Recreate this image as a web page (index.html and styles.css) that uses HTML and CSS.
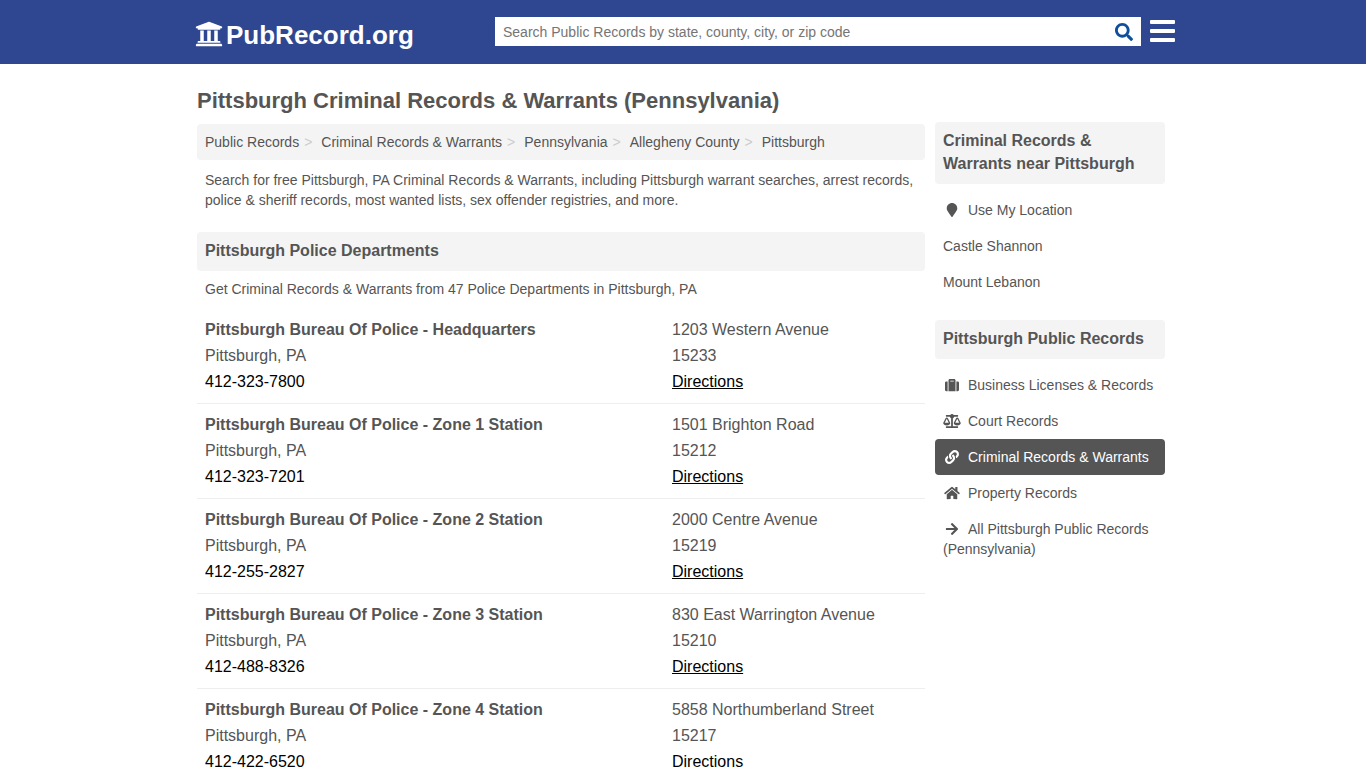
FILE: index.html
```html
<!DOCTYPE html>
<html lang="en">
<head>
<meta charset="utf-8">
<meta name="viewport" content="width=device-width, initial-scale=1">
<title>Pittsburgh Criminal Records &amp; Warrants (Pennsylvania)</title>
<link rel="stylesheet" href="styles.css">
</head>
<body>
<header class="site-header">
  <div class="header-inner">
    <a class="logo" href="#">
      <svg class="logo-icon" viewBox="0 0 512 512" aria-hidden="true"><path d="M496 128v16a8 8 0 0 1-8 8h-24v12c0 6.627-5.373 12-12 12H60c-6.627 0-12-5.373-12-12v-12H24a8 8 0 0 1-8-8v-16a8 8 0 0 1 4.941-7.392l232-88a7.996 7.996 0 0 1 6.118 0l232 88A8 8 0 0 1 496 128zm-24 304H40c-13.255 0-24 10.745-24 24v16a8 8 0 0 0 8 8h464a8 8 0 0 0 8-8v-16c0-13.255-10.745-24-24-24zM96 192v192H60c-6.627 0-12 5.373-12 12v20h416v-20c0-6.627-5.373-12-12-12h-36V192h-64v192h-64V192h-64v192h-64V192H96z"/></svg>
      <span>PubRecord.org</span>
    </a>
    <form class="search" role="search">
      <input class="search-input" type="text" aria-label="Search Public Records" placeholder="Search Public Records by state, county, city, or zip code">
      <button class="search-button" type="button" aria-label="Search">
        <svg class="search-icon" viewBox="0 0 512 512" aria-hidden="true"><path d="M505 442.700L405.300 343c-4.500-4.500-10.600-7-17-7H372c27.600-35.300 44-79.700 44-128C416 93.100 322.900 0 208 0S0 93.100 0 208s93.100 208 208 208c48.300 0 92.700-16.400 128-44v16.300c0 6.400 2.500 12.500 7 17l99.700 99.700c9.400 9.400 24.600 9.400 33.900 0l28.300-28.300c9.400-9.400 9.400-24.600.1-34zM208 336c-70.700 0-128-57.200-128-128 0-70.700 57.200-128 128-128 70.700 0 128 57.200 128 128 0 70.700-57.200 128-128 128z"/></svg>
      </button>
    </form>
    <button class="menu-button" type="button" aria-label="Menu">
      <svg class="menu-icon" viewBox="0 0 25 22" aria-hidden="true"><path d="M1 0h23a1 1 0 0 1 1 1v2a1 1 0 0 1-1 1H1a1 1 0 0 1-1-1V1a1 1 0 0 1 1-1zM1 9h23a1 1 0 0 1 1 1v2a1 1 0 0 1-1 1H1a1 1 0 0 1-1-1v-2a1 1 0 0 1 1-1zM1 18h23a1 1 0 0 1 1 1v2a1 1 0 0 1-1 1H1a1 1 0 0 1-1-1v-2a1 1 0 0 1 1-1z"/></svg>
    </button>
  </div>
</header>

<div class="page">
  <main class="content">
    <h1 class="page-title">Pittsburgh Criminal Records &amp; Warrants (Pennsylvania)</h1>
    <nav aria-label="Breadcrumb">
      <ol class="breadcrumb">
        <li><a href="#">Public Records</a></li>
        <li><a href="#">Criminal Records &amp; Warrants</a></li>
        <li><a href="#">Pennsylvania</a></li>
        <li><a href="#">Allegheny County</a></li>
        <li><a href="#">Pittsburgh</a></li>
      </ol>
    </nav>
    <p class="intro">Search for free Pittsburgh, PA Criminal Records &amp; Warrants, including Pittsburgh warrant searches, arrest records, police &amp; sheriff records, most wanted lists, sex offender registries, and more.</p>

    <section>
      <h2 class="section-title">Pittsburgh Police Departments</h2>
      <p class="section-note">Get Criminal Records &amp; Warrants from 47 Police Departments in Pittsburgh, PA</p>
      <article class="listing">
        <div><h3 class="listing-name">Pittsburgh Bureau Of Police - Headquarters</h3><p>Pittsburgh, PA</p><a class="phone" href="#">412-323-7800</a></div>
        <div><p>1203 Western Avenue</p><p>15233</p><a class="directions" href="#">Directions</a></div>
      </article>
      <article class="listing">
        <div><h3 class="listing-name">Pittsburgh Bureau Of Police - Zone 1 Station</h3><p>Pittsburgh, PA</p><a class="phone" href="#">412-323-7201</a></div>
        <div><p>1501 Brighton Road</p><p>15212</p><a class="directions" href="#">Directions</a></div>
      </article>
      <article class="listing">
        <div><h3 class="listing-name">Pittsburgh Bureau Of Police - Zone 2 Station</h3><p>Pittsburgh, PA</p><a class="phone" href="#">412-255-2827</a></div>
        <div><p>2000 Centre Avenue</p><p>15219</p><a class="directions" href="#">Directions</a></div>
      </article>
      <article class="listing">
        <div><h3 class="listing-name">Pittsburgh Bureau Of Police - Zone 3 Station</h3><p>Pittsburgh, PA</p><a class="phone" href="#">412-488-8326</a></div>
        <div><p>830 East Warrington Avenue</p><p>15210</p><a class="directions" href="#">Directions</a></div>
      </article>
      <article class="listing">
        <div><h3 class="listing-name">Pittsburgh Bureau Of Police - Zone 4 Station</h3><p>Pittsburgh, PA</p><a class="phone" href="#">412-422-6520</a></div>
        <div><p>5858 Northumberland Street</p><p>15217</p><a class="directions" href="#">Directions</a></div>
      </article>
    </section>
  </main>

  <aside class="sidebar">
    <section>
      <h2 class="section-title">Criminal Records &amp; Warrants near Pittsburgh</h2>
      <ul class="side-list">
        <li><a href="#"><svg class="icon" viewBox="0 0 384 512" aria-hidden="true"><path d="M172.268 501.670C26.970 291.031 0 269.413 0 192 0 85.961 85.961 0 192 0s192 85.961 192 192c0 77.413-26.970 99.031-172.268 309.670-9.535 13.774-29.930 13.773-39.464 0z"/></svg>Use My Location</a></li>
        <li><a href="#">Castle Shannon</a></li>
        <li><a href="#">Mount Lebanon</a></li>
      </ul>
    </section>
    <section>
      <h2 class="section-title">Pittsburgh Public Records</h2>
      <ul class="side-list">
        <li><a href="#"><svg class="icon" viewBox="0 0 512 512" aria-hidden="true"><path d="M128 480h256V80c0-26.500-21.500-48-48-48H176c-26.500 0-48 21.500-48 48v400zm64-384h128v32H192V96zm320 80v256c0 26.500-21.500 48-48 48h-48V128h48c26.500 0 48 21.500 48 48zM96 480H48c-26.500 0-48-21.500-48-48V176c0-26.500 21.500-48 48-48h48v352z"/></svg>Business Licenses &amp; Records</a></li>
        <li><a href="#"><svg class="icon" viewBox="0 0 640 512" aria-hidden="true"><path d="M256 336h-.02c0-16.180 1.340-8.730-85.050-181.510-17.650-35.290-68.190-35.360-85.870 0C-2.060 328.750.02 320.330.02 336H0c0 44.180 57.310 80 128 80s128-35.820 128-80zM128 176l72 144H56l72-144zm511.980 160c0-16.180 1.340-8.730-85.050-181.510-17.650-35.290-68.190-35.360-85.870 0-87.120 174.260-85.040 165.840-85.040 181.510H384c0 44.180 57.310 80 128 80s128-35.820 128-80h-.02zM440 320l72-144 72 144H440zm88 128H352V153.250c23.510-10.290 41.160-31.480 46.390-57.250H528c8.840 0 16-7.160 16-16V48c0-8.840-7.160-16-16-16H383.640C369.040 12.680 346.090 0 320 0s-49.040 12.680-63.640 32H112c-8.840 0-16 7.160-16 16v32c0 8.840 7.160 16 16 16h129.610c5.230 25.760 22.870 46.960 46.390 57.250V448H112c-8.840 0-16 7.160-16 16v32c0 8.840 7.160 16 16 16h416c8.840 0 16-7.160 16-16v-32c0-8.840-7.160-16-16-16z"/></svg>Court Records</a></li>
        <li><a class="active" aria-current="page" href="#"><svg class="icon" viewBox="0 0 512 512" aria-hidden="true"><path d="M326.612 185.391c59.747 59.809 58.927 155.698.360 214.590-.110.120-.240.250-.360.370l-67.200 67.200c-59.270 59.270-155.699 59.262-214.960 0-59.270-59.260-59.270-155.700 0-214.960l37.106-37.106c9.840-9.840 26.786-3.300 27.294 10.606.648 17.722 3.826 35.527 9.690 52.721 1.986 5.822.567 12.262-3.783 16.612l-13.087 13.087c-28.026 28.026-28.905 73.660-1.155 101.960 28.024 28.579 74.086 28.749 102.325.510l67.200-67.190c28.191-28.191 28.073-73.757 0-101.830-3.701-3.694-7.429-6.564-10.341-8.569a16.037 16.037 0 0 1-6.947-12.606c-.396-10.567 3.348-21.456 11.698-29.806l21.054-21.055c5.521-5.521 14.182-6.199 20.584-1.731a152.482 152.482 0 0 1 20.522 17.197zM467.547 44.449c-59.261-59.262-155.690-59.270-214.960 0l-67.200 67.200c-.120.120-.250.250-.360.370-58.566 58.892-59.387 154.781.360 214.590a152.454 152.454 0 0 0 20.521 17.196c6.402 4.468 15.064 3.789 20.584-1.731l21.054-21.055c8.350-8.350 12.094-19.239 11.698-29.806a16.037 16.037 0 0 0-6.947-12.606c-2.912-2.005-6.640-4.875-10.341-8.569-28.073-28.073-28.191-73.639 0-101.830l67.200-67.190c28.239-28.239 74.300-28.069 102.325.510 27.750 28.300 26.872 73.934-1.155 101.960l-13.087 13.087c-4.350 4.350-5.769 10.790-3.783 16.612 5.864 17.194 9.042 34.999 9.690 52.721.509 13.906 17.454 20.446 27.294 10.606l37.106-37.106c59.271-59.259 59.271-155.699.001-214.959z"/></svg>Criminal Records &amp; Warrants</a></li>
        <li><a href="#"><svg class="icon" viewBox="0 0 576 512" aria-hidden="true"><path d="M280.370 148.260L96 300.110V464a16 16 0 0 0 16 16l112.060-.290a16 16 0 0 0 15.920-16V368a16 16 0 0 1 16-16h64a16 16 0 0 1 16 16v95.640a16 16 0 0 0 16 16.050L464 480a16 16 0 0 0 16-16V300L295.670 148.260a12.190 12.190 0 0 0-15.300 0zM571.600 251.470L488 182.560V44.050a12 12 0 0 0-12-12h-56a12 12 0 0 0-12 12v72.610L318.470 43a48 48 0 0 0-61 0L4.340 251.470a12 12 0 0 0-1.600 16.900l25.500 31A12 12 0 0 0 45.150 301l235.220-193.740a12.190 12.190 0 0 1 15.300 0L530.900 301a12 12 0 0 0 16.900-1.600l25.500-31a12 12 0 0 0-1.700-16.930z"/></svg>Property Records</a></li>
        <li><a href="#"><svg class="icon" viewBox="0 0 448 512" aria-hidden="true"><path d="M190.500 66.900l22.200-22.200c9.400-9.400 24.600-9.400 33.900 0L441 239c9.400 9.400 9.400 24.600 0 33.900L246.600 467.300c-9.400 9.400-24.600 9.400-33.900 0l-22.200-22.200c-9.500-9.500-9.300-25 .4-34.300L311.400 296H24c-13.300 0-24-10.700-24-24v-32c0-13.300 10.700-24 24-24h287.400L190.900 101.200c-9.800-9.300-10-24.800-.4-34.300z"/></svg>All Pittsburgh Public Records (Pennsylvania)</a></li>
      </ul>
    </section>
  </aside>
</div>
</body>
</html>
```
FILE: styles.css
```css
* {
  box-sizing: border-box;
}

body {
  margin: 0;
  background: #fff;
  color: #555;
  font-family: "Liberation Sans", Arial, sans-serif;
  font-size: 14px;
  line-height: 20px;
}

h1, h2, h3, p, ul, ol {
  margin: 0;
  padding: 0;
}

ul, ol {
  list-style: none;
}

a {
  color: inherit;
  text-decoration: none;
}

button {
  border: 0;
  padding: 0;
  background: none;
  cursor: pointer;
}

svg {
  fill: currentColor;
}

/* Header */
.site-header {
  background: #2e4790;
  color: #fff;
}

.header-inner {
  display: flex;
  align-items: flex-start;
  max-width: 984px;
  height: 64px;
  margin: 0 auto;
  padding: 17px 0 0 4px;
}

.logo {
  display: flex;
  align-items: center;
  flex: 0 0 300px;
  gap: 3px;
  font-size: 26px;
  font-weight: bold;
  line-height: 36px;
}

.logo-icon {
  width: 28px;
  height: 28px;
  margin-bottom: 2px;
}

.search {
  display: flex;
  flex: 1;
  height: 29px;
  background: #fff;
}

.search-input {
  flex: 1;
  min-width: 0;
  border: 0;
  padding: 0 8px;
  background: none;
  color: #555;
  font: inherit;
}

.search-input::placeholder {
  color: #757575;
  opacity: 1;
}

.search-button {
  width: 34px;
  color: #0d4f9e;
}

.search-icon {
  display: block;
  width: 18px;
  height: 18px;
  margin: 0 auto;
}

.menu-button {
  margin: 3px 0 0 9px;
  color: #fff;
}

.menu-icon {
  display: block;
  width: 25px;
  height: 22px;
}

/* Columns */
.page {
  display: flex;
  gap: 10px;
  max-width: 980px;
  margin: 0 auto;
  padding: 22px 8px 0 4px;
}

.content {
  flex: 1;
  min-width: 0;
}

.sidebar {
  flex: 0 0 230px;
  padding-top: 36px;
}

.page-title {
  padding-bottom: 8px;
  font-size: 22px;
  line-height: 30px;
}

.breadcrumb {
  display: flex;
  flex-wrap: wrap;
  padding: 8px;
  border-radius: 4px;
  background: #f4f4f4;
}

.breadcrumb li + li::before {
  content: ">";
  margin: 0 9px 0 5px;
  color: #ccc;
}

.intro {
  padding: 10px 8px 22px;
}

.section-title {
  padding: 7px 8px 9px;
  border-radius: 4px;
  background: #f4f4f4;
  font-size: 16px;
  line-height: 23px;
}

.section-note {
  padding: 8px 8px 10px;
}

.listing {
  display: grid;
  grid-template-columns: 467px 1fr;
  padding: 8px;
  border-bottom: 1px solid #eee;
  font-size: 16px;
  line-height: 26px;
}

.listing-name {
  font-size: 16px;
}

.phone {
  color: #000;
}

.directions {
  color: #000;
  text-decoration: underline;
}

/* Sidebar */
.side-list {
  padding: 8px 0 20px;
}

.side-list a {
  display: block;
  padding: 8px;
  border-radius: 4px;
}

.side-list .active {
  background: #555;
  color: #fff;
}

.icon {
  width: 18px;
  height: 14px;
  margin-right: 7px;
  vertical-align: -2px;
}
```
